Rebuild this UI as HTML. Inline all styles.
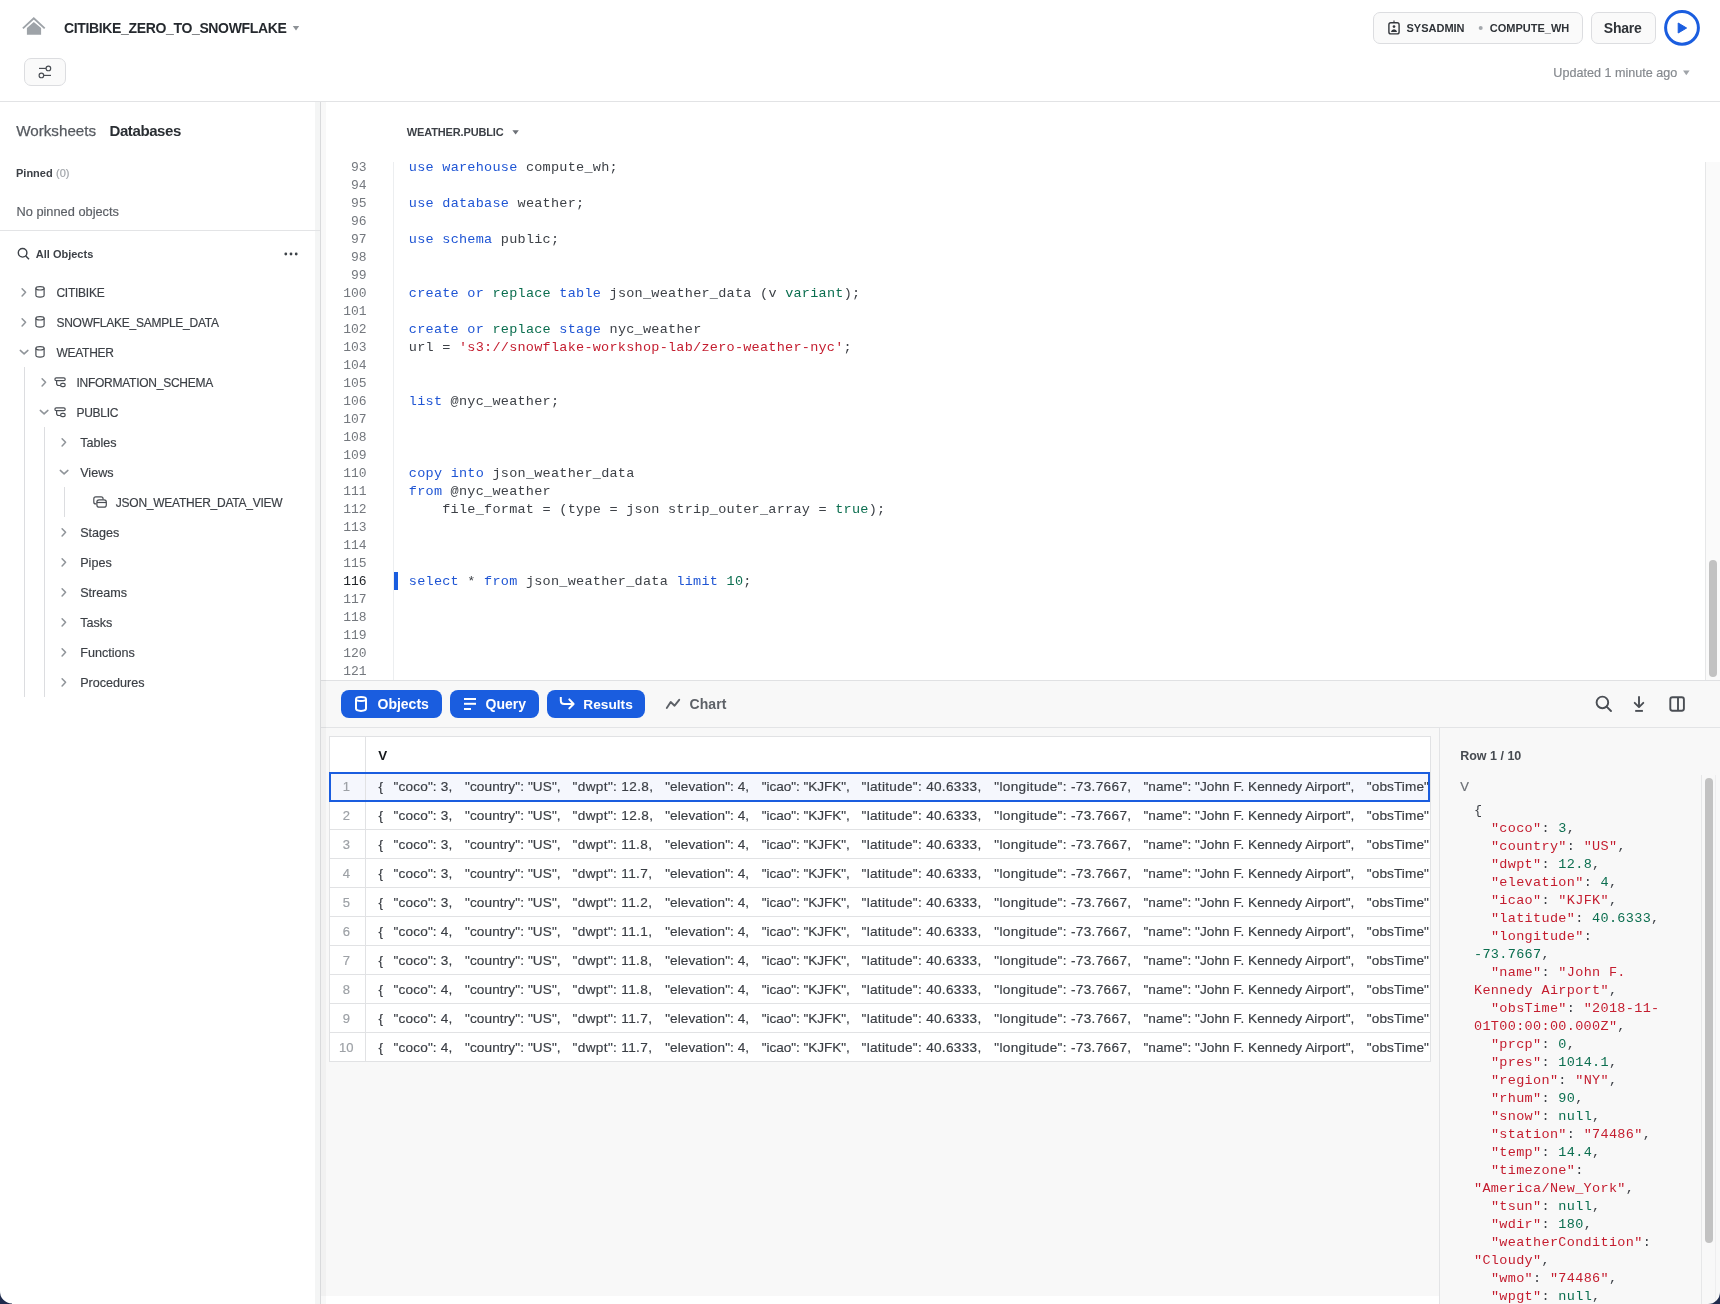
<!DOCTYPE html><html><head><meta charset="utf-8"><style>
*{box-sizing:border-box;margin:0;padding:0}
html,body{width:1720px;height:1304px;overflow:hidden;background:#fff}
body{position:relative;font-family:'Liberation Sans',sans-serif}
#w{position:absolute;left:0;top:0;width:1720px;height:1304px;will-change:transform}
.t{position:absolute;white-space:pre}
.r{-webkit-text-stroke:0.18px currentColor}
.a{position:absolute}
svg{position:absolute;overflow:visible}
</style></head><body><div id="w">
<div class="a" style="left:0;top:101px;width:1720px;height:1px;background:#e2e3e5"></div>
<svg style="left:0;top:0" width="60" height="40"><polyline points="22.9,28.4 33.8,18.3 44.7,28.4" fill="none" stroke="#9ea3a8" stroke-width="1.9"/><polygon points="26.9,28 33.8,21.9 41.1,28 41.1,34.8 26.9,34.8" fill="#9ea3a8"/></svg>
<div class="t" style="left:64.00px;top:21px;font-size:14px;line-height:14px;font-weight:700;color:#25292e;font-family:'Liberation Sans', sans-serif;letter-spacing:-0.35px;">CITIBIKE_ZERO_TO_SNOWFLAKE</div>
<svg style="left:0;top:0" width="320" height="40"><polygon points="292.8,26 299.2,26 296,30.4" fill="#8d9196"/></svg>
<div class="a" style="left:24px;top:58px;width:42px;height:28px;border:1px solid #dcdde0;border-radius:7px;background:#fafafa"></div>
<svg style="left:0;top:0" width="80" height="100"><g fill="none" stroke="#4a4e54" stroke-width="1.15"><line x1="39" y1="68.4" x2="46.1" y2="68.4"/><circle cx="48.4" cy="68.4" r="2.3"/><line x1="43.7" y1="75.4" x2="51" y2="75.4"/><circle cx="41.4" cy="75.4" r="2.3"/></g></svg>
<div class="a" style="left:1373px;top:12px;width:210px;height:32px;border:1px solid #dcdde0;border-radius:7px;background:#fafafa"></div>
<svg style="left:0;top:0" width="1720" height="50"><g fill="none" stroke="#33373c" stroke-width="1.4"><rect x="1388.9" y="22.8" width="10.2" height="11.1" rx="2"/><line x1="1394" y1="20.4" x2="1394" y2="22.8" stroke-width="1.1"/></g><circle cx="1394" cy="26.6" r="1.35" fill="#33373c"/><path d="M1390.9 31.9 Q1391.5 29.2 1394 29.2 Q1396.5 29.2 1397.1 31.9 Z" fill="#33373c"/><circle cx="1480.7" cy="28" r="2" fill="#a4a8ad"/></svg>
<div class="t" style="left:1406.50px;top:23px;font-size:11px;line-height:11px;font-weight:700;color:#2f3338;font-family:'Liberation Sans', sans-serif;letter-spacing:0px;">SYSADMIN</div>
<div class="t" style="left:1489.80px;top:23px;font-size:11px;line-height:11px;font-weight:700;color:#2f3338;font-family:'Liberation Sans', sans-serif;letter-spacing:0px;">COMPUTE_WH</div>
<div class="a" style="left:1591px;top:12px;width:65px;height:32px;border:1px solid #dcdde0;border-radius:7px;background:#fafafa"></div>
<div class="t" style="left:1603.80px;top:21px;font-size:14px;line-height:14px;font-weight:700;color:#2f3338;font-family:'Liberation Sans', sans-serif;letter-spacing:-0.2px;">Share</div>
<svg style="left:0;top:0" width="1720" height="60"><circle cx="1682" cy="27.8" r="16.4" fill="#fff" stroke="#1a5ddf" stroke-width="3"/><polygon points="1678.2,23 1686.6,28 1678.2,33" fill="#1a5ddf" stroke="#1a5ddf" stroke-width="1" stroke-linejoin="round"/></svg>
<div class="t r" style="left:1553.30px;top:67px;font-size:12.6px;line-height:12.6px;font-weight:400;color:#85898e;font-family:'Liberation Sans', sans-serif;letter-spacing:0px;">Updated 1 minute ago</div>
<svg style="left:0;top:0" width="1720" height="100"><polygon points="1683,70.5 1689.6,70.5 1686.3,75.2" fill="#a0a4a9"/></svg>
<div class="a" style="left:315px;top:102px;width:5px;height:1202px;background:#f4f5f5"></div>
<div class="a" style="left:320px;top:102px;width:1px;height:1202px;background:#d9dadc"></div>
<div class="t" style="left:16.20px;top:123px;font-size:15.2px;line-height:15.2px;font-weight:400;color:#565a60;font-family:'Liberation Sans', sans-serif;letter-spacing:0px;-webkit-text-stroke:0.25px #565a60">Worksheets</div>
<div class="t" style="left:109.50px;top:123px;font-size:15px;line-height:15px;font-weight:700;color:#2a2e33;font-family:'Liberation Sans', sans-serif;letter-spacing:-0.4px;">Databases</div>
<div class="t" style="left:16.00px;top:168px;font-size:11px;line-height:11px;font-weight:700;color:#3d4147;font-family:'Liberation Sans', sans-serif;letter-spacing:0px;">Pinned</div>
<div class="t r" style="left:56.00px;top:168px;font-size:11px;line-height:11px;font-weight:400;color:#a0a4a9;font-family:'Liberation Sans', sans-serif;letter-spacing:0px;">(0)</div>
<div class="t r" style="left:16.50px;top:206px;font-size:12.8px;line-height:12.8px;font-weight:400;color:#5b5f65;font-family:'Liberation Sans', sans-serif;letter-spacing:0px;">No pinned objects</div>
<div class="a" style="left:0;top:230px;width:320px;height:1px;background:#e3e4e6"></div>
<svg style="left:0;top:0" width="320" height="300"><circle cx="22.6" cy="252.8" r="4.3" fill="none" stroke="#3d4248" stroke-width="1.4"/><line x1="25.8" y1="256" x2="29" y2="259.2" stroke="#3d4248" stroke-width="1.5"/><circle cx="285.8" cy="254" r="1.4" fill="#3d4248"/><circle cx="291" cy="254" r="1.4" fill="#3d4248"/><circle cx="296.2" cy="254" r="1.4" fill="#3d4248"/></svg>
<div class="t" style="left:35.80px;top:249px;font-size:11px;line-height:11px;font-weight:700;color:#3d4147;font-family:'Liberation Sans', sans-serif;letter-spacing:0px;">All Objects</div>
<div class="t r" style="left:56.40px;top:287px;font-size:12px;line-height:12px;font-weight:400;color:#3b3f45;font-family:'Liberation Sans', sans-serif;letter-spacing:-0.25px;">CITIBIKE</div>
<div class="t r" style="left:56.40px;top:317px;font-size:12px;line-height:12px;font-weight:400;color:#3b3f45;font-family:'Liberation Sans', sans-serif;letter-spacing:-0.25px;">SNOWFLAKE_SAMPLE_DATA</div>
<div class="t r" style="left:56.40px;top:347px;font-size:12px;line-height:12px;font-weight:400;color:#3b3f45;font-family:'Liberation Sans', sans-serif;letter-spacing:-0.25px;">WEATHER</div>
<div class="t r" style="left:76.40px;top:377px;font-size:12px;line-height:12px;font-weight:400;color:#3b3f45;font-family:'Liberation Sans', sans-serif;letter-spacing:-0.25px;">INFORMATION_SCHEMA</div>
<div class="t r" style="left:76.40px;top:407px;font-size:12px;line-height:12px;font-weight:400;color:#3b3f45;font-family:'Liberation Sans', sans-serif;letter-spacing:-0.25px;">PUBLIC</div>
<div class="t r" style="left:80.20px;top:437px;font-size:12.6px;line-height:12.6px;font-weight:400;color:#3b3f45;font-family:'Liberation Sans', sans-serif;letter-spacing:0px;">Tables</div>
<div class="t r" style="left:80.20px;top:467px;font-size:12.6px;line-height:12.6px;font-weight:400;color:#3b3f45;font-family:'Liberation Sans', sans-serif;letter-spacing:0px;">Views</div>
<div class="t r" style="left:115.80px;top:497px;font-size:12px;line-height:12px;font-weight:400;color:#3b3f45;font-family:'Liberation Sans', sans-serif;letter-spacing:-0.25px;">JSON_WEATHER_DATA_VIEW</div>
<div class="t r" style="left:80.20px;top:527px;font-size:12.6px;line-height:12.6px;font-weight:400;color:#3b3f45;font-family:'Liberation Sans', sans-serif;letter-spacing:0px;">Stages</div>
<div class="t r" style="left:80.20px;top:557px;font-size:12.6px;line-height:12.6px;font-weight:400;color:#3b3f45;font-family:'Liberation Sans', sans-serif;letter-spacing:0px;">Pipes</div>
<div class="t r" style="left:80.20px;top:587px;font-size:12.6px;line-height:12.6px;font-weight:400;color:#3b3f45;font-family:'Liberation Sans', sans-serif;letter-spacing:0px;">Streams</div>
<div class="t r" style="left:80.20px;top:617px;font-size:12.6px;line-height:12.6px;font-weight:400;color:#3b3f45;font-family:'Liberation Sans', sans-serif;letter-spacing:0px;">Tasks</div>
<div class="t r" style="left:80.20px;top:647px;font-size:12.6px;line-height:12.6px;font-weight:400;color:#3b3f45;font-family:'Liberation Sans', sans-serif;letter-spacing:0px;">Functions</div>
<div class="t r" style="left:80.20px;top:677px;font-size:12.6px;line-height:12.6px;font-weight:400;color:#3b3f45;font-family:'Liberation Sans', sans-serif;letter-spacing:0px;">Procedures</div>
<svg style="left:0;top:0" width="320" height="720"><g fill="none" stroke="#8f9499" stroke-width="1.5" stroke-linecap="round" stroke-linejoin="round"><polyline points="22.1,288.7 25.6,292.3 22.1,295.90000000000003"/><polyline points="22.1,318.7 25.6,322.3 22.1,325.90000000000003"/><polyline points="20.3,350.40000000000003 24.1,353.90000000000003 27.9,350.40000000000003"/><polyline points="42.099999999999994,378.7 45.599999999999994,382.3 42.099999999999994,385.90000000000003"/><polyline points="40.3,410.40000000000003 44.099999999999994,413.90000000000003 47.9,410.40000000000003"/><polyline points="62.099999999999994,438.7 65.6,442.3 62.099999999999994,445.90000000000003"/><polyline points="60.3,470.40000000000003 64.1,473.90000000000003 67.89999999999999,470.40000000000003"/><polyline points="62.099999999999994,528.6999999999999 65.6,532.3 62.099999999999994,535.9"/><polyline points="62.099999999999994,558.6999999999999 65.6,562.3 62.099999999999994,565.9"/><polyline points="62.099999999999994,588.6999999999999 65.6,592.3 62.099999999999994,595.9"/><polyline points="62.099999999999994,618.6999999999999 65.6,622.3 62.099999999999994,625.9"/><polyline points="62.099999999999994,648.6999999999999 65.6,652.3 62.099999999999994,655.9"/><polyline points="62.099999999999994,678.6999999999999 65.6,682.3 62.099999999999994,685.9"/></g><g fill="none" stroke="#4a4e54" stroke-width="1.2"><path d="M35.900000000000006 288.3 v7 q0 1.8 4.1 1.8 q4.1 0 4.1 -1.8 v-7"/><ellipse cx="40.0" cy="288.3" rx="4.1" ry="1.7"/><path d="M35.900000000000006 318.3 v7 q0 1.8 4.1 1.8 q4.1 0 4.1 -1.8 v-7"/><ellipse cx="40.0" cy="318.3" rx="4.1" ry="1.7"/><path d="M35.900000000000006 348.3 v7 q0 1.8 4.1 1.8 q4.1 0 4.1 -1.8 v-7"/><ellipse cx="40.0" cy="348.3" rx="4.1" ry="1.7"/><rect x="54.9" y="377.8" width="10.3" height="2.9" rx="1.45"/><rect x="60.6" y="383.3" width="4.6" height="3.3" rx="1.65"/><path d="M56.6 380.7 v2.6 q0 2.2 2.2 2.2 h1.8"/><rect x="54.9" y="407.8" width="10.3" height="2.9" rx="1.45"/><rect x="60.6" y="413.3" width="4.6" height="3.3" rx="1.65"/><path d="M56.6 410.7 v2.6 q0 2.2 2.2 2.2 h1.8"/><rect x="96.9" y="499.90000000000003" width="9.4" height="7.2" rx="2.2"/><path d="M96.3 503.90000000000003 h-0.5 a2 2 0 0 1 -2 -2 v-3 a2 2 0 0 1 2 -2 h5.3 a2 2 0 0 1 2 2 v0.6"/><line x1="96.9" y1="502.5" x2="106.3" y2="502.5"/></g></svg>
<div class="a" style="left:24px;top:367px;width:1px;height:330px;background:#dcdde0"></div>
<div class="a" style="left:44px;top:427px;width:1px;height:270px;background:#dcdde0"></div>
<div class="a" style="left:64px;top:487px;width:1px;height:30px;background:#dcdde0"></div>
<div class="t" style="left:406.80px;top:127px;font-size:11px;line-height:11px;font-weight:700;color:#3d4147;font-family:'Liberation Sans', sans-serif;letter-spacing:-0.15px;">WEATHER.PUBLIC</div>
<svg style="left:0;top:0" width="600" height="200"><polygon points="512.4,130.2 518.8,130.2 515.6,134.4" fill="#6d7177"/></svg>
<div class="a" style="left:393px;top:162px;width:1px;height:518px;background:#eceef0"></div>
<div class="t" style="left:326px;width:40.6px;text-align:right;top:161px;font:13px/13px 'Liberation Mono', monospace;letter-spacing:0px;color:#74787e">93</div>
<div class="t" style="left:408.8px;top:161px;font:13.5px/13.5px 'Liberation Mono', monospace;letter-spacing:0.26px;color:#3d4147"><span style="color:#1f55d4">use</span> <span style="color:#1f55d4">warehouse</span> compute_wh;</div>
<div class="t" style="left:326px;width:40.6px;text-align:right;top:179px;font:13px/13px 'Liberation Mono', monospace;letter-spacing:0px;color:#74787e">94</div>
<div class="t" style="left:326px;width:40.6px;text-align:right;top:197px;font:13px/13px 'Liberation Mono', monospace;letter-spacing:0px;color:#74787e">95</div>
<div class="t" style="left:408.8px;top:197px;font:13.5px/13.5px 'Liberation Mono', monospace;letter-spacing:0.26px;color:#3d4147"><span style="color:#1f55d4">use</span> <span style="color:#1f55d4">database</span> weather;</div>
<div class="t" style="left:326px;width:40.6px;text-align:right;top:215px;font:13px/13px 'Liberation Mono', monospace;letter-spacing:0px;color:#74787e">96</div>
<div class="t" style="left:326px;width:40.6px;text-align:right;top:233px;font:13px/13px 'Liberation Mono', monospace;letter-spacing:0px;color:#74787e">97</div>
<div class="t" style="left:408.8px;top:233px;font:13.5px/13.5px 'Liberation Mono', monospace;letter-spacing:0.26px;color:#3d4147"><span style="color:#1f55d4">use</span> <span style="color:#1f55d4">schema</span> public;</div>
<div class="t" style="left:326px;width:40.6px;text-align:right;top:251px;font:13px/13px 'Liberation Mono', monospace;letter-spacing:0px;color:#74787e">98</div>
<div class="t" style="left:326px;width:40.6px;text-align:right;top:269px;font:13px/13px 'Liberation Mono', monospace;letter-spacing:0px;color:#74787e">99</div>
<div class="t" style="left:326px;width:40.6px;text-align:right;top:287px;font:13px/13px 'Liberation Mono', monospace;letter-spacing:0px;color:#74787e">100</div>
<div class="t" style="left:408.8px;top:287px;font:13.5px/13.5px 'Liberation Mono', monospace;letter-spacing:0.26px;color:#3d4147"><span style="color:#1f55d4">create</span> <span style="color:#1f55d4">or</span> <span style="color:#0b6e4f">replace</span> <span style="color:#1f55d4">table</span> json_weather_data (v <span style="color:#0b6e4f">variant</span>);</div>
<div class="t" style="left:326px;width:40.6px;text-align:right;top:305px;font:13px/13px 'Liberation Mono', monospace;letter-spacing:0px;color:#74787e">101</div>
<div class="t" style="left:326px;width:40.6px;text-align:right;top:323px;font:13px/13px 'Liberation Mono', monospace;letter-spacing:0px;color:#74787e">102</div>
<div class="t" style="left:408.8px;top:323px;font:13.5px/13.5px 'Liberation Mono', monospace;letter-spacing:0.26px;color:#3d4147"><span style="color:#1f55d4">create</span> <span style="color:#1f55d4">or</span> <span style="color:#0b6e4f">replace</span> <span style="color:#1f55d4">stage</span> nyc_weather</div>
<div class="t" style="left:326px;width:40.6px;text-align:right;top:341px;font:13px/13px 'Liberation Mono', monospace;letter-spacing:0px;color:#74787e">103</div>
<div class="t" style="left:408.8px;top:341px;font:13.5px/13.5px 'Liberation Mono', monospace;letter-spacing:0.26px;color:#3d4147">url = <span style="color:#c41d2f">&#x27;s3://snowflake-workshop-lab/zero-weather-nyc&#x27;</span>;</div>
<div class="t" style="left:326px;width:40.6px;text-align:right;top:359px;font:13px/13px 'Liberation Mono', monospace;letter-spacing:0px;color:#74787e">104</div>
<div class="t" style="left:326px;width:40.6px;text-align:right;top:377px;font:13px/13px 'Liberation Mono', monospace;letter-spacing:0px;color:#74787e">105</div>
<div class="t" style="left:326px;width:40.6px;text-align:right;top:395px;font:13px/13px 'Liberation Mono', monospace;letter-spacing:0px;color:#74787e">106</div>
<div class="t" style="left:408.8px;top:395px;font:13.5px/13.5px 'Liberation Mono', monospace;letter-spacing:0.26px;color:#3d4147"><span style="color:#1f55d4">list</span> @nyc_weather;</div>
<div class="t" style="left:326px;width:40.6px;text-align:right;top:413px;font:13px/13px 'Liberation Mono', monospace;letter-spacing:0px;color:#74787e">107</div>
<div class="t" style="left:326px;width:40.6px;text-align:right;top:431px;font:13px/13px 'Liberation Mono', monospace;letter-spacing:0px;color:#74787e">108</div>
<div class="t" style="left:326px;width:40.6px;text-align:right;top:449px;font:13px/13px 'Liberation Mono', monospace;letter-spacing:0px;color:#74787e">109</div>
<div class="t" style="left:326px;width:40.6px;text-align:right;top:467px;font:13px/13px 'Liberation Mono', monospace;letter-spacing:0px;color:#74787e">110</div>
<div class="t" style="left:408.8px;top:467px;font:13.5px/13.5px 'Liberation Mono', monospace;letter-spacing:0.26px;color:#3d4147"><span style="color:#1f55d4">copy</span> <span style="color:#1f55d4">into</span> json_weather_data</div>
<div class="t" style="left:326px;width:40.6px;text-align:right;top:485px;font:13px/13px 'Liberation Mono', monospace;letter-spacing:0px;color:#74787e">111</div>
<div class="t" style="left:408.8px;top:485px;font:13.5px/13.5px 'Liberation Mono', monospace;letter-spacing:0.26px;color:#3d4147"><span style="color:#1f55d4">from</span> @nyc_weather</div>
<div class="t" style="left:326px;width:40.6px;text-align:right;top:503px;font:13px/13px 'Liberation Mono', monospace;letter-spacing:0px;color:#74787e">112</div>
<div class="t" style="left:408.8px;top:503px;font:13.5px/13.5px 'Liberation Mono', monospace;letter-spacing:0.26px;color:#3d4147">    file_format = (type = json strip_outer_array = <span style="color:#0b6e4f">true</span>);</div>
<div class="t" style="left:326px;width:40.6px;text-align:right;top:521px;font:13px/13px 'Liberation Mono', monospace;letter-spacing:0px;color:#74787e">113</div>
<div class="t" style="left:326px;width:40.6px;text-align:right;top:539px;font:13px/13px 'Liberation Mono', monospace;letter-spacing:0px;color:#74787e">114</div>
<div class="t" style="left:326px;width:40.6px;text-align:right;top:557px;font:13px/13px 'Liberation Mono', monospace;letter-spacing:0px;color:#74787e">115</div>
<div class="t" style="left:326px;width:40.6px;text-align:right;top:575px;font:13px/13px 'Liberation Mono', monospace;letter-spacing:0px;color:#1e2226">116</div>
<div class="t" style="left:408.8px;top:575px;font:13.5px/13.5px 'Liberation Mono', monospace;letter-spacing:0.26px;color:#3d4147"><span style="color:#1f55d4">select</span> * <span style="color:#1f55d4">from</span> json_weather_data <span style="color:#1f55d4">limit</span> <span style="color:#0b6e4f">10</span>;</div>
<div class="t" style="left:326px;width:40.6px;text-align:right;top:593px;font:13px/13px 'Liberation Mono', monospace;letter-spacing:0px;color:#74787e">117</div>
<div class="t" style="left:326px;width:40.6px;text-align:right;top:611px;font:13px/13px 'Liberation Mono', monospace;letter-spacing:0px;color:#74787e">118</div>
<div class="t" style="left:326px;width:40.6px;text-align:right;top:629px;font:13px/13px 'Liberation Mono', monospace;letter-spacing:0px;color:#74787e">119</div>
<div class="t" style="left:326px;width:40.6px;text-align:right;top:647px;font:13px/13px 'Liberation Mono', monospace;letter-spacing:0px;color:#74787e">120</div>
<div class="t" style="left:326px;width:40.6px;text-align:right;top:665px;font:13px/13px 'Liberation Mono', monospace;letter-spacing:0px;color:#74787e">121</div>
<div class="a" style="left:394px;top:572px;width:4px;height:18px;background:#1a5ddf"></div>
<div class="a" style="left:1705px;top:162px;width:15px;height:518px;background:#fafafa;border-left:1px solid #e6e7e8"></div>
<div class="a" style="left:1709px;top:560px;width:8px;height:117px;border-radius:4px;background:#c2c2c2"></div>
<div class="a" style="left:321px;top:680px;width:1399px;height:1px;background:#e0e1e3"></div>
<div class="a" style="left:321px;top:681px;width:1399px;height:46px;background:#f8f8f8"></div>
<div class="a" style="left:321px;top:727px;width:1399px;height:1px;background:#e3e4e6"></div>
<div class="a" style="left:341px;top:690px;width:101px;height:28px;border-radius:8px;background:#1a5ddf"></div>
<div class="t" style="left:377.50px;top:697px;font-size:14px;line-height:14px;font-weight:700;color:#ffffff;font-family:'Liberation Sans', sans-serif;letter-spacing:0px;">Objects</div>
<div class="a" style="left:450px;top:690px;width:89px;height:28px;border-radius:8px;background:#1a5ddf"></div>
<div class="t" style="left:485.50px;top:697px;font-size:14px;line-height:14px;font-weight:700;color:#ffffff;font-family:'Liberation Sans', sans-serif;letter-spacing:0px;">Query</div>
<div class="a" style="left:547px;top:690px;width:98px;height:28px;border-radius:8px;background:#1a5ddf"></div>
<div class="t" style="left:583.30px;top:698px;font-size:13.7px;line-height:13.7px;font-weight:700;color:#ffffff;font-family:'Liberation Sans', sans-serif;letter-spacing:0px;">Results</div>
<svg style="left:0;top:0" width="1720" height="760"><g fill="none" stroke="#fff" stroke-width="2"><path d="M356 699 v9.6 q0 2.3 5 2.3 q5 0 5 -2.3 v-9.6"/><ellipse cx="361" cy="699" rx="5" ry="2"/><line x1="464" y1="699" x2="476" y2="699"/><line x1="464" y1="703.8" x2="476" y2="703.8"/><line x1="464" y1="709" x2="471" y2="709"/><path d="M560.8 696.9 v3.6 q0 3.5 3.5 3.5 h9.2" stroke-linejoin="round"/><polyline points="569.3,699.4 573.6,704 569.3,708.4" stroke-linecap="round" stroke-linejoin="round"/></g><polyline points="666.8,708 670.7,702 674.6,705.7 679.2,699.8" fill="none" stroke="#5d6167" stroke-width="1.9" stroke-linecap="round" stroke-linejoin="round"/><g fill="none" stroke="#4a4e54" stroke-width="1.9"><circle cx="1602.4" cy="702.4" r="5.8"/><line x1="1606.6" y1="706.6" x2="1611" y2="711" stroke-linecap="round"/><line x1="1639" y1="696.3" x2="1639" y2="707"/><polyline points="1634.7,702.8 1639,707.1 1643.3,702.8" stroke-linejoin="round" stroke-linecap="round"/><line x1="1635.2" y1="710.9" x2="1642.9" y2="710.9"/><rect x="1670.3" y="697.2" width="13.6" height="13.6" rx="2.2"/><line x1="1678" y1="697.2" x2="1678" y2="710.8"/></g></svg>
<div class="t" style="left:689.60px;top:697px;font-size:14px;line-height:14px;font-weight:700;color:#5d6167;font-family:'Liberation Sans', sans-serif;letter-spacing:0.05px;">Chart</div>
<div class="a" style="left:321px;top:728px;width:1118px;height:568px;background:#f8f8f8"></div>
<div class="a" style="left:1439px;top:728px;width:1px;height:576px;background:#e3e4e6"></div>
<div class="a" style="left:1440px;top:728px;width:280px;height:576px;background:#f8f8f8"></div>
<div class="a" style="left:329px;top:736px;width:1102px;height:326px;background:#fff;border:1px solid #e1e2e4"></div>
<div class="a" style="left:365px;top:736px;width:1px;height:326px;background:#e1e2e4"></div>
<div class="t" style="left:378.30px;top:749px;font-size:13.4px;line-height:13.4px;font-weight:700;color:#15181c;font-family:'Liberation Sans', sans-serif;letter-spacing:0px;">V</div>
<div class="a" style="left:329px;top:772px;width:1102px;height:30px;background:#f5f7fd"></div>
<div class="t r" style="left:328.80px;top:780px;font-size:13px;line-height:13px;font-weight:400;color:#9da1a6;font-family:'Liberation Sans', sans-serif;letter-spacing:0px;width:35px;text-align:center">1</div>
<div class="t r" style="left:378.40px;top:780px;font-size:13.6px;line-height:13.6px;font-weight:400;color:#3a3e44;font-family:'Liberation Sans', sans-serif;letter-spacing:0px;">{</div>
<div class="t r" style="left:393.60px;top:780px;font-size:13.6px;line-height:13.6px;font-weight:400;color:#3a3e44;font-family:'Liberation Sans', sans-serif;letter-spacing:0.15px;">&quot;coco&quot;: 3,</div>
<div class="t r" style="left:465.00px;top:780px;font-size:13.6px;line-height:13.6px;font-weight:400;color:#3a3e44;font-family:'Liberation Sans', sans-serif;letter-spacing:0.1px;">&quot;country&quot;: &quot;US&quot;,</div>
<div class="t r" style="left:572.60px;top:780px;font-size:13.6px;line-height:13.6px;font-weight:400;color:#3a3e44;font-family:'Liberation Sans', sans-serif;letter-spacing:0.35px;">&quot;dwpt&quot;: 12.8,</div>
<div class="t r" style="left:665.20px;top:780px;font-size:13.6px;line-height:13.6px;font-weight:400;color:#3a3e44;font-family:'Liberation Sans', sans-serif;letter-spacing:0.07px;">&quot;elevation&quot;: 4,</div>
<div class="t r" style="left:761.80px;top:780px;font-size:13.6px;line-height:13.6px;font-weight:400;color:#3a3e44;font-family:'Liberation Sans', sans-serif;letter-spacing:-0.05px;">&quot;icao&quot;: &quot;KJFK&quot;,</div>
<div class="t r" style="left:861.50px;top:780px;font-size:13.6px;line-height:13.6px;font-weight:400;color:#3a3e44;font-family:'Liberation Sans', sans-serif;letter-spacing:0.3px;">&quot;latitude&quot;: 40.6333,</div>
<div class="t r" style="left:994.30px;top:780px;font-size:13.6px;line-height:13.6px;font-weight:400;color:#3a3e44;font-family:'Liberation Sans', sans-serif;letter-spacing:0.33px;">&quot;longitude&quot;: -73.7667,</div>
<div class="t r" style="left:1143.40px;top:780px;font-size:13.6px;line-height:13.6px;font-weight:400;color:#3a3e44;font-family:'Liberation Sans', sans-serif;letter-spacing:0.06px;">&quot;name&quot;: &quot;John F. Kennedy Airport&quot;,</div>
<div class="t r" style="left:1366.80px;top:780px;font-size:13.6px;line-height:13.6px;font-weight:400;color:#3a3e44;font-family:'Liberation Sans', sans-serif;letter-spacing:0.1px;">&quot;obsTime&quot;</div>
<div class="a" style="left:330px;top:800px;width:1100px;height:1px;background:#e1e2e4"></div>
<div class="t r" style="left:328.80px;top:809px;font-size:13px;line-height:13px;font-weight:400;color:#9da1a6;font-family:'Liberation Sans', sans-serif;letter-spacing:0px;width:35px;text-align:center">2</div>
<div class="t r" style="left:378.40px;top:809px;font-size:13.6px;line-height:13.6px;font-weight:400;color:#3a3e44;font-family:'Liberation Sans', sans-serif;letter-spacing:0px;">{</div>
<div class="t r" style="left:393.60px;top:809px;font-size:13.6px;line-height:13.6px;font-weight:400;color:#3a3e44;font-family:'Liberation Sans', sans-serif;letter-spacing:0.15px;">&quot;coco&quot;: 3,</div>
<div class="t r" style="left:465.00px;top:809px;font-size:13.6px;line-height:13.6px;font-weight:400;color:#3a3e44;font-family:'Liberation Sans', sans-serif;letter-spacing:0.1px;">&quot;country&quot;: &quot;US&quot;,</div>
<div class="t r" style="left:572.60px;top:809px;font-size:13.6px;line-height:13.6px;font-weight:400;color:#3a3e44;font-family:'Liberation Sans', sans-serif;letter-spacing:0.35px;">&quot;dwpt&quot;: 12.8,</div>
<div class="t r" style="left:665.20px;top:809px;font-size:13.6px;line-height:13.6px;font-weight:400;color:#3a3e44;font-family:'Liberation Sans', sans-serif;letter-spacing:0.07px;">&quot;elevation&quot;: 4,</div>
<div class="t r" style="left:761.80px;top:809px;font-size:13.6px;line-height:13.6px;font-weight:400;color:#3a3e44;font-family:'Liberation Sans', sans-serif;letter-spacing:-0.05px;">&quot;icao&quot;: &quot;KJFK&quot;,</div>
<div class="t r" style="left:861.50px;top:809px;font-size:13.6px;line-height:13.6px;font-weight:400;color:#3a3e44;font-family:'Liberation Sans', sans-serif;letter-spacing:0.3px;">&quot;latitude&quot;: 40.6333,</div>
<div class="t r" style="left:994.30px;top:809px;font-size:13.6px;line-height:13.6px;font-weight:400;color:#3a3e44;font-family:'Liberation Sans', sans-serif;letter-spacing:0.33px;">&quot;longitude&quot;: -73.7667,</div>
<div class="t r" style="left:1143.40px;top:809px;font-size:13.6px;line-height:13.6px;font-weight:400;color:#3a3e44;font-family:'Liberation Sans', sans-serif;letter-spacing:0.06px;">&quot;name&quot;: &quot;John F. Kennedy Airport&quot;,</div>
<div class="t r" style="left:1366.80px;top:809px;font-size:13.6px;line-height:13.6px;font-weight:400;color:#3a3e44;font-family:'Liberation Sans', sans-serif;letter-spacing:0.1px;">&quot;obsTime&quot;</div>
<div class="a" style="left:330px;top:829px;width:1100px;height:1px;background:#e1e2e4"></div>
<div class="t r" style="left:328.80px;top:838px;font-size:13px;line-height:13px;font-weight:400;color:#9da1a6;font-family:'Liberation Sans', sans-serif;letter-spacing:0px;width:35px;text-align:center">3</div>
<div class="t r" style="left:378.40px;top:838px;font-size:13.6px;line-height:13.6px;font-weight:400;color:#3a3e44;font-family:'Liberation Sans', sans-serif;letter-spacing:0px;">{</div>
<div class="t r" style="left:393.60px;top:838px;font-size:13.6px;line-height:13.6px;font-weight:400;color:#3a3e44;font-family:'Liberation Sans', sans-serif;letter-spacing:0.15px;">&quot;coco&quot;: 3,</div>
<div class="t r" style="left:465.00px;top:838px;font-size:13.6px;line-height:13.6px;font-weight:400;color:#3a3e44;font-family:'Liberation Sans', sans-serif;letter-spacing:0.1px;">&quot;country&quot;: &quot;US&quot;,</div>
<div class="t r" style="left:572.60px;top:838px;font-size:13.6px;line-height:13.6px;font-weight:400;color:#3a3e44;font-family:'Liberation Sans', sans-serif;letter-spacing:0.35px;">&quot;dwpt&quot;: 11.8,</div>
<div class="t r" style="left:665.20px;top:838px;font-size:13.6px;line-height:13.6px;font-weight:400;color:#3a3e44;font-family:'Liberation Sans', sans-serif;letter-spacing:0.07px;">&quot;elevation&quot;: 4,</div>
<div class="t r" style="left:761.80px;top:838px;font-size:13.6px;line-height:13.6px;font-weight:400;color:#3a3e44;font-family:'Liberation Sans', sans-serif;letter-spacing:-0.05px;">&quot;icao&quot;: &quot;KJFK&quot;,</div>
<div class="t r" style="left:861.50px;top:838px;font-size:13.6px;line-height:13.6px;font-weight:400;color:#3a3e44;font-family:'Liberation Sans', sans-serif;letter-spacing:0.3px;">&quot;latitude&quot;: 40.6333,</div>
<div class="t r" style="left:994.30px;top:838px;font-size:13.6px;line-height:13.6px;font-weight:400;color:#3a3e44;font-family:'Liberation Sans', sans-serif;letter-spacing:0.33px;">&quot;longitude&quot;: -73.7667,</div>
<div class="t r" style="left:1143.40px;top:838px;font-size:13.6px;line-height:13.6px;font-weight:400;color:#3a3e44;font-family:'Liberation Sans', sans-serif;letter-spacing:0.06px;">&quot;name&quot;: &quot;John F. Kennedy Airport&quot;,</div>
<div class="t r" style="left:1366.80px;top:838px;font-size:13.6px;line-height:13.6px;font-weight:400;color:#3a3e44;font-family:'Liberation Sans', sans-serif;letter-spacing:0.1px;">&quot;obsTime&quot;</div>
<div class="a" style="left:330px;top:858px;width:1100px;height:1px;background:#e1e2e4"></div>
<div class="t r" style="left:328.80px;top:867px;font-size:13px;line-height:13px;font-weight:400;color:#9da1a6;font-family:'Liberation Sans', sans-serif;letter-spacing:0px;width:35px;text-align:center">4</div>
<div class="t r" style="left:378.40px;top:867px;font-size:13.6px;line-height:13.6px;font-weight:400;color:#3a3e44;font-family:'Liberation Sans', sans-serif;letter-spacing:0px;">{</div>
<div class="t r" style="left:393.60px;top:867px;font-size:13.6px;line-height:13.6px;font-weight:400;color:#3a3e44;font-family:'Liberation Sans', sans-serif;letter-spacing:0.15px;">&quot;coco&quot;: 3,</div>
<div class="t r" style="left:465.00px;top:867px;font-size:13.6px;line-height:13.6px;font-weight:400;color:#3a3e44;font-family:'Liberation Sans', sans-serif;letter-spacing:0.1px;">&quot;country&quot;: &quot;US&quot;,</div>
<div class="t r" style="left:572.60px;top:867px;font-size:13.6px;line-height:13.6px;font-weight:400;color:#3a3e44;font-family:'Liberation Sans', sans-serif;letter-spacing:0.35px;">&quot;dwpt&quot;: 11.7,</div>
<div class="t r" style="left:665.20px;top:867px;font-size:13.6px;line-height:13.6px;font-weight:400;color:#3a3e44;font-family:'Liberation Sans', sans-serif;letter-spacing:0.07px;">&quot;elevation&quot;: 4,</div>
<div class="t r" style="left:761.80px;top:867px;font-size:13.6px;line-height:13.6px;font-weight:400;color:#3a3e44;font-family:'Liberation Sans', sans-serif;letter-spacing:-0.05px;">&quot;icao&quot;: &quot;KJFK&quot;,</div>
<div class="t r" style="left:861.50px;top:867px;font-size:13.6px;line-height:13.6px;font-weight:400;color:#3a3e44;font-family:'Liberation Sans', sans-serif;letter-spacing:0.3px;">&quot;latitude&quot;: 40.6333,</div>
<div class="t r" style="left:994.30px;top:867px;font-size:13.6px;line-height:13.6px;font-weight:400;color:#3a3e44;font-family:'Liberation Sans', sans-serif;letter-spacing:0.33px;">&quot;longitude&quot;: -73.7667,</div>
<div class="t r" style="left:1143.40px;top:867px;font-size:13.6px;line-height:13.6px;font-weight:400;color:#3a3e44;font-family:'Liberation Sans', sans-serif;letter-spacing:0.06px;">&quot;name&quot;: &quot;John F. Kennedy Airport&quot;,</div>
<div class="t r" style="left:1366.80px;top:867px;font-size:13.6px;line-height:13.6px;font-weight:400;color:#3a3e44;font-family:'Liberation Sans', sans-serif;letter-spacing:0.1px;">&quot;obsTime&quot;</div>
<div class="a" style="left:330px;top:887px;width:1100px;height:1px;background:#e1e2e4"></div>
<div class="t r" style="left:328.80px;top:896px;font-size:13px;line-height:13px;font-weight:400;color:#9da1a6;font-family:'Liberation Sans', sans-serif;letter-spacing:0px;width:35px;text-align:center">5</div>
<div class="t r" style="left:378.40px;top:896px;font-size:13.6px;line-height:13.6px;font-weight:400;color:#3a3e44;font-family:'Liberation Sans', sans-serif;letter-spacing:0px;">{</div>
<div class="t r" style="left:393.60px;top:896px;font-size:13.6px;line-height:13.6px;font-weight:400;color:#3a3e44;font-family:'Liberation Sans', sans-serif;letter-spacing:0.15px;">&quot;coco&quot;: 3,</div>
<div class="t r" style="left:465.00px;top:896px;font-size:13.6px;line-height:13.6px;font-weight:400;color:#3a3e44;font-family:'Liberation Sans', sans-serif;letter-spacing:0.1px;">&quot;country&quot;: &quot;US&quot;,</div>
<div class="t r" style="left:572.60px;top:896px;font-size:13.6px;line-height:13.6px;font-weight:400;color:#3a3e44;font-family:'Liberation Sans', sans-serif;letter-spacing:0.35px;">&quot;dwpt&quot;: 11.2,</div>
<div class="t r" style="left:665.20px;top:896px;font-size:13.6px;line-height:13.6px;font-weight:400;color:#3a3e44;font-family:'Liberation Sans', sans-serif;letter-spacing:0.07px;">&quot;elevation&quot;: 4,</div>
<div class="t r" style="left:761.80px;top:896px;font-size:13.6px;line-height:13.6px;font-weight:400;color:#3a3e44;font-family:'Liberation Sans', sans-serif;letter-spacing:-0.05px;">&quot;icao&quot;: &quot;KJFK&quot;,</div>
<div class="t r" style="left:861.50px;top:896px;font-size:13.6px;line-height:13.6px;font-weight:400;color:#3a3e44;font-family:'Liberation Sans', sans-serif;letter-spacing:0.3px;">&quot;latitude&quot;: 40.6333,</div>
<div class="t r" style="left:994.30px;top:896px;font-size:13.6px;line-height:13.6px;font-weight:400;color:#3a3e44;font-family:'Liberation Sans', sans-serif;letter-spacing:0.33px;">&quot;longitude&quot;: -73.7667,</div>
<div class="t r" style="left:1143.40px;top:896px;font-size:13.6px;line-height:13.6px;font-weight:400;color:#3a3e44;font-family:'Liberation Sans', sans-serif;letter-spacing:0.06px;">&quot;name&quot;: &quot;John F. Kennedy Airport&quot;,</div>
<div class="t r" style="left:1366.80px;top:896px;font-size:13.6px;line-height:13.6px;font-weight:400;color:#3a3e44;font-family:'Liberation Sans', sans-serif;letter-spacing:0.1px;">&quot;obsTime&quot;</div>
<div class="a" style="left:330px;top:916px;width:1100px;height:1px;background:#e1e2e4"></div>
<div class="t r" style="left:328.80px;top:925px;font-size:13px;line-height:13px;font-weight:400;color:#9da1a6;font-family:'Liberation Sans', sans-serif;letter-spacing:0px;width:35px;text-align:center">6</div>
<div class="t r" style="left:378.40px;top:925px;font-size:13.6px;line-height:13.6px;font-weight:400;color:#3a3e44;font-family:'Liberation Sans', sans-serif;letter-spacing:0px;">{</div>
<div class="t r" style="left:393.60px;top:925px;font-size:13.6px;line-height:13.6px;font-weight:400;color:#3a3e44;font-family:'Liberation Sans', sans-serif;letter-spacing:0.15px;">&quot;coco&quot;: 4,</div>
<div class="t r" style="left:465.00px;top:925px;font-size:13.6px;line-height:13.6px;font-weight:400;color:#3a3e44;font-family:'Liberation Sans', sans-serif;letter-spacing:0.1px;">&quot;country&quot;: &quot;US&quot;,</div>
<div class="t r" style="left:572.60px;top:925px;font-size:13.6px;line-height:13.6px;font-weight:400;color:#3a3e44;font-family:'Liberation Sans', sans-serif;letter-spacing:0.35px;">&quot;dwpt&quot;: 11.1,</div>
<div class="t r" style="left:665.20px;top:925px;font-size:13.6px;line-height:13.6px;font-weight:400;color:#3a3e44;font-family:'Liberation Sans', sans-serif;letter-spacing:0.07px;">&quot;elevation&quot;: 4,</div>
<div class="t r" style="left:761.80px;top:925px;font-size:13.6px;line-height:13.6px;font-weight:400;color:#3a3e44;font-family:'Liberation Sans', sans-serif;letter-spacing:-0.05px;">&quot;icao&quot;: &quot;KJFK&quot;,</div>
<div class="t r" style="left:861.50px;top:925px;font-size:13.6px;line-height:13.6px;font-weight:400;color:#3a3e44;font-family:'Liberation Sans', sans-serif;letter-spacing:0.3px;">&quot;latitude&quot;: 40.6333,</div>
<div class="t r" style="left:994.30px;top:925px;font-size:13.6px;line-height:13.6px;font-weight:400;color:#3a3e44;font-family:'Liberation Sans', sans-serif;letter-spacing:0.33px;">&quot;longitude&quot;: -73.7667,</div>
<div class="t r" style="left:1143.40px;top:925px;font-size:13.6px;line-height:13.6px;font-weight:400;color:#3a3e44;font-family:'Liberation Sans', sans-serif;letter-spacing:0.06px;">&quot;name&quot;: &quot;John F. Kennedy Airport&quot;,</div>
<div class="t r" style="left:1366.80px;top:925px;font-size:13.6px;line-height:13.6px;font-weight:400;color:#3a3e44;font-family:'Liberation Sans', sans-serif;letter-spacing:0.1px;">&quot;obsTime&quot;</div>
<div class="a" style="left:330px;top:945px;width:1100px;height:1px;background:#e1e2e4"></div>
<div class="t r" style="left:328.80px;top:954px;font-size:13px;line-height:13px;font-weight:400;color:#9da1a6;font-family:'Liberation Sans', sans-serif;letter-spacing:0px;width:35px;text-align:center">7</div>
<div class="t r" style="left:378.40px;top:954px;font-size:13.6px;line-height:13.6px;font-weight:400;color:#3a3e44;font-family:'Liberation Sans', sans-serif;letter-spacing:0px;">{</div>
<div class="t r" style="left:393.60px;top:954px;font-size:13.6px;line-height:13.6px;font-weight:400;color:#3a3e44;font-family:'Liberation Sans', sans-serif;letter-spacing:0.15px;">&quot;coco&quot;: 3,</div>
<div class="t r" style="left:465.00px;top:954px;font-size:13.6px;line-height:13.6px;font-weight:400;color:#3a3e44;font-family:'Liberation Sans', sans-serif;letter-spacing:0.1px;">&quot;country&quot;: &quot;US&quot;,</div>
<div class="t r" style="left:572.60px;top:954px;font-size:13.6px;line-height:13.6px;font-weight:400;color:#3a3e44;font-family:'Liberation Sans', sans-serif;letter-spacing:0.35px;">&quot;dwpt&quot;: 11.8,</div>
<div class="t r" style="left:665.20px;top:954px;font-size:13.6px;line-height:13.6px;font-weight:400;color:#3a3e44;font-family:'Liberation Sans', sans-serif;letter-spacing:0.07px;">&quot;elevation&quot;: 4,</div>
<div class="t r" style="left:761.80px;top:954px;font-size:13.6px;line-height:13.6px;font-weight:400;color:#3a3e44;font-family:'Liberation Sans', sans-serif;letter-spacing:-0.05px;">&quot;icao&quot;: &quot;KJFK&quot;,</div>
<div class="t r" style="left:861.50px;top:954px;font-size:13.6px;line-height:13.6px;font-weight:400;color:#3a3e44;font-family:'Liberation Sans', sans-serif;letter-spacing:0.3px;">&quot;latitude&quot;: 40.6333,</div>
<div class="t r" style="left:994.30px;top:954px;font-size:13.6px;line-height:13.6px;font-weight:400;color:#3a3e44;font-family:'Liberation Sans', sans-serif;letter-spacing:0.33px;">&quot;longitude&quot;: -73.7667,</div>
<div class="t r" style="left:1143.40px;top:954px;font-size:13.6px;line-height:13.6px;font-weight:400;color:#3a3e44;font-family:'Liberation Sans', sans-serif;letter-spacing:0.06px;">&quot;name&quot;: &quot;John F. Kennedy Airport&quot;,</div>
<div class="t r" style="left:1366.80px;top:954px;font-size:13.6px;line-height:13.6px;font-weight:400;color:#3a3e44;font-family:'Liberation Sans', sans-serif;letter-spacing:0.1px;">&quot;obsTime&quot;</div>
<div class="a" style="left:330px;top:974px;width:1100px;height:1px;background:#e1e2e4"></div>
<div class="t r" style="left:328.80px;top:983px;font-size:13px;line-height:13px;font-weight:400;color:#9da1a6;font-family:'Liberation Sans', sans-serif;letter-spacing:0px;width:35px;text-align:center">8</div>
<div class="t r" style="left:378.40px;top:983px;font-size:13.6px;line-height:13.6px;font-weight:400;color:#3a3e44;font-family:'Liberation Sans', sans-serif;letter-spacing:0px;">{</div>
<div class="t r" style="left:393.60px;top:983px;font-size:13.6px;line-height:13.6px;font-weight:400;color:#3a3e44;font-family:'Liberation Sans', sans-serif;letter-spacing:0.15px;">&quot;coco&quot;: 4,</div>
<div class="t r" style="left:465.00px;top:983px;font-size:13.6px;line-height:13.6px;font-weight:400;color:#3a3e44;font-family:'Liberation Sans', sans-serif;letter-spacing:0.1px;">&quot;country&quot;: &quot;US&quot;,</div>
<div class="t r" style="left:572.60px;top:983px;font-size:13.6px;line-height:13.6px;font-weight:400;color:#3a3e44;font-family:'Liberation Sans', sans-serif;letter-spacing:0.35px;">&quot;dwpt&quot;: 11.8,</div>
<div class="t r" style="left:665.20px;top:983px;font-size:13.6px;line-height:13.6px;font-weight:400;color:#3a3e44;font-family:'Liberation Sans', sans-serif;letter-spacing:0.07px;">&quot;elevation&quot;: 4,</div>
<div class="t r" style="left:761.80px;top:983px;font-size:13.6px;line-height:13.6px;font-weight:400;color:#3a3e44;font-family:'Liberation Sans', sans-serif;letter-spacing:-0.05px;">&quot;icao&quot;: &quot;KJFK&quot;,</div>
<div class="t r" style="left:861.50px;top:983px;font-size:13.6px;line-height:13.6px;font-weight:400;color:#3a3e44;font-family:'Liberation Sans', sans-serif;letter-spacing:0.3px;">&quot;latitude&quot;: 40.6333,</div>
<div class="t r" style="left:994.30px;top:983px;font-size:13.6px;line-height:13.6px;font-weight:400;color:#3a3e44;font-family:'Liberation Sans', sans-serif;letter-spacing:0.33px;">&quot;longitude&quot;: -73.7667,</div>
<div class="t r" style="left:1143.40px;top:983px;font-size:13.6px;line-height:13.6px;font-weight:400;color:#3a3e44;font-family:'Liberation Sans', sans-serif;letter-spacing:0.06px;">&quot;name&quot;: &quot;John F. Kennedy Airport&quot;,</div>
<div class="t r" style="left:1366.80px;top:983px;font-size:13.6px;line-height:13.6px;font-weight:400;color:#3a3e44;font-family:'Liberation Sans', sans-serif;letter-spacing:0.1px;">&quot;obsTime&quot;</div>
<div class="a" style="left:330px;top:1003px;width:1100px;height:1px;background:#e1e2e4"></div>
<div class="t r" style="left:328.80px;top:1012px;font-size:13px;line-height:13px;font-weight:400;color:#9da1a6;font-family:'Liberation Sans', sans-serif;letter-spacing:0px;width:35px;text-align:center">9</div>
<div class="t r" style="left:378.40px;top:1012px;font-size:13.6px;line-height:13.6px;font-weight:400;color:#3a3e44;font-family:'Liberation Sans', sans-serif;letter-spacing:0px;">{</div>
<div class="t r" style="left:393.60px;top:1012px;font-size:13.6px;line-height:13.6px;font-weight:400;color:#3a3e44;font-family:'Liberation Sans', sans-serif;letter-spacing:0.15px;">&quot;coco&quot;: 4,</div>
<div class="t r" style="left:465.00px;top:1012px;font-size:13.6px;line-height:13.6px;font-weight:400;color:#3a3e44;font-family:'Liberation Sans', sans-serif;letter-spacing:0.1px;">&quot;country&quot;: &quot;US&quot;,</div>
<div class="t r" style="left:572.60px;top:1012px;font-size:13.6px;line-height:13.6px;font-weight:400;color:#3a3e44;font-family:'Liberation Sans', sans-serif;letter-spacing:0.35px;">&quot;dwpt&quot;: 11.7,</div>
<div class="t r" style="left:665.20px;top:1012px;font-size:13.6px;line-height:13.6px;font-weight:400;color:#3a3e44;font-family:'Liberation Sans', sans-serif;letter-spacing:0.07px;">&quot;elevation&quot;: 4,</div>
<div class="t r" style="left:761.80px;top:1012px;font-size:13.6px;line-height:13.6px;font-weight:400;color:#3a3e44;font-family:'Liberation Sans', sans-serif;letter-spacing:-0.05px;">&quot;icao&quot;: &quot;KJFK&quot;,</div>
<div class="t r" style="left:861.50px;top:1012px;font-size:13.6px;line-height:13.6px;font-weight:400;color:#3a3e44;font-family:'Liberation Sans', sans-serif;letter-spacing:0.3px;">&quot;latitude&quot;: 40.6333,</div>
<div class="t r" style="left:994.30px;top:1012px;font-size:13.6px;line-height:13.6px;font-weight:400;color:#3a3e44;font-family:'Liberation Sans', sans-serif;letter-spacing:0.33px;">&quot;longitude&quot;: -73.7667,</div>
<div class="t r" style="left:1143.40px;top:1012px;font-size:13.6px;line-height:13.6px;font-weight:400;color:#3a3e44;font-family:'Liberation Sans', sans-serif;letter-spacing:0.06px;">&quot;name&quot;: &quot;John F. Kennedy Airport&quot;,</div>
<div class="t r" style="left:1366.80px;top:1012px;font-size:13.6px;line-height:13.6px;font-weight:400;color:#3a3e44;font-family:'Liberation Sans', sans-serif;letter-spacing:0.1px;">&quot;obsTime&quot;</div>
<div class="a" style="left:330px;top:1032px;width:1100px;height:1px;background:#e1e2e4"></div>
<div class="t r" style="left:328.80px;top:1041px;font-size:13px;line-height:13px;font-weight:400;color:#9da1a6;font-family:'Liberation Sans', sans-serif;letter-spacing:0px;width:35px;text-align:center">10</div>
<div class="t r" style="left:378.40px;top:1041px;font-size:13.6px;line-height:13.6px;font-weight:400;color:#3a3e44;font-family:'Liberation Sans', sans-serif;letter-spacing:0px;">{</div>
<div class="t r" style="left:393.60px;top:1041px;font-size:13.6px;line-height:13.6px;font-weight:400;color:#3a3e44;font-family:'Liberation Sans', sans-serif;letter-spacing:0.15px;">&quot;coco&quot;: 4,</div>
<div class="t r" style="left:465.00px;top:1041px;font-size:13.6px;line-height:13.6px;font-weight:400;color:#3a3e44;font-family:'Liberation Sans', sans-serif;letter-spacing:0.1px;">&quot;country&quot;: &quot;US&quot;,</div>
<div class="t r" style="left:572.60px;top:1041px;font-size:13.6px;line-height:13.6px;font-weight:400;color:#3a3e44;font-family:'Liberation Sans', sans-serif;letter-spacing:0.35px;">&quot;dwpt&quot;: 11.7,</div>
<div class="t r" style="left:665.20px;top:1041px;font-size:13.6px;line-height:13.6px;font-weight:400;color:#3a3e44;font-family:'Liberation Sans', sans-serif;letter-spacing:0.07px;">&quot;elevation&quot;: 4,</div>
<div class="t r" style="left:761.80px;top:1041px;font-size:13.6px;line-height:13.6px;font-weight:400;color:#3a3e44;font-family:'Liberation Sans', sans-serif;letter-spacing:-0.05px;">&quot;icao&quot;: &quot;KJFK&quot;,</div>
<div class="t r" style="left:861.50px;top:1041px;font-size:13.6px;line-height:13.6px;font-weight:400;color:#3a3e44;font-family:'Liberation Sans', sans-serif;letter-spacing:0.3px;">&quot;latitude&quot;: 40.6333,</div>
<div class="t r" style="left:994.30px;top:1041px;font-size:13.6px;line-height:13.6px;font-weight:400;color:#3a3e44;font-family:'Liberation Sans', sans-serif;letter-spacing:0.33px;">&quot;longitude&quot;: -73.7667,</div>
<div class="t r" style="left:1143.40px;top:1041px;font-size:13.6px;line-height:13.6px;font-weight:400;color:#3a3e44;font-family:'Liberation Sans', sans-serif;letter-spacing:0.06px;">&quot;name&quot;: &quot;John F. Kennedy Airport&quot;,</div>
<div class="t r" style="left:1366.80px;top:1041px;font-size:13.6px;line-height:13.6px;font-weight:400;color:#3a3e44;font-family:'Liberation Sans', sans-serif;letter-spacing:0.1px;">&quot;obsTime&quot;</div>
<div class="a" style="left:1431px;top:736px;width:8px;height:326px;background:#f8f8f8"></div>
<div class="a" style="left:1430px;top:736px;width:1px;height:326px;background:#e1e2e4"></div>
<div class="a" style="left:365px;top:736px;width:1px;height:326px;background:#e1e2e4"></div>
<div class="a" style="left:329px;top:772px;width:1101px;height:30px;border:2px solid #1a5ddf"></div>
<div class="t" style="left:1460.20px;top:750px;font-size:12.5px;line-height:12.5px;font-weight:700;color:#464a50;font-family:'Liberation Sans', sans-serif;letter-spacing:0px;">Row 1 / 10</div>
<div class="t r" style="left:1460.20px;top:780px;font-size:13px;line-height:13px;font-weight:400;color:#6b6f75;font-family:'Liberation Sans', sans-serif;letter-spacing:0px;">V</div>
<div class="a" style="left:1440px;top:800px;width:261px;height:504px;overflow:hidden">
<div class="t" style="left:34px;top:4px;font:13.5px/13.5px 'Liberation Mono', monospace;letter-spacing:0.33px"><span style="color:#3d4147">{</span></div>
<div class="t" style="left:34px;top:22px;font:13.5px/13.5px 'Liberation Mono', monospace;letter-spacing:0.33px"><span style="color:#3d4147">  </span><span style="color:#c41d2f">&quot;coco&quot;</span><span style="color:#3d4147">: </span><span style="color:#0b6e4f">3</span><span style="color:#3d4147">,</span></div>
<div class="t" style="left:34px;top:40px;font:13.5px/13.5px 'Liberation Mono', monospace;letter-spacing:0.33px"><span style="color:#3d4147">  </span><span style="color:#c41d2f">&quot;country&quot;</span><span style="color:#3d4147">: </span><span style="color:#c41d2f">&quot;US&quot;</span><span style="color:#3d4147">,</span></div>
<div class="t" style="left:34px;top:58px;font:13.5px/13.5px 'Liberation Mono', monospace;letter-spacing:0.33px"><span style="color:#3d4147">  </span><span style="color:#c41d2f">&quot;dwpt&quot;</span><span style="color:#3d4147">: </span><span style="color:#0b6e4f">12.8</span><span style="color:#3d4147">,</span></div>
<div class="t" style="left:34px;top:76px;font:13.5px/13.5px 'Liberation Mono', monospace;letter-spacing:0.33px"><span style="color:#3d4147">  </span><span style="color:#c41d2f">&quot;elevation&quot;</span><span style="color:#3d4147">: </span><span style="color:#0b6e4f">4</span><span style="color:#3d4147">,</span></div>
<div class="t" style="left:34px;top:94px;font:13.5px/13.5px 'Liberation Mono', monospace;letter-spacing:0.33px"><span style="color:#3d4147">  </span><span style="color:#c41d2f">&quot;icao&quot;</span><span style="color:#3d4147">: </span><span style="color:#c41d2f">&quot;KJFK&quot;</span><span style="color:#3d4147">,</span></div>
<div class="t" style="left:34px;top:112px;font:13.5px/13.5px 'Liberation Mono', monospace;letter-spacing:0.33px"><span style="color:#3d4147">  </span><span style="color:#c41d2f">&quot;latitude&quot;</span><span style="color:#3d4147">: </span><span style="color:#0b6e4f">40.6333</span><span style="color:#3d4147">,</span></div>
<div class="t" style="left:34px;top:130px;font:13.5px/13.5px 'Liberation Mono', monospace;letter-spacing:0.33px"><span style="color:#3d4147">  </span><span style="color:#c41d2f">&quot;longitude&quot;</span><span style="color:#3d4147">:</span></div>
<div class="t" style="left:34px;top:148px;font:13.5px/13.5px 'Liberation Mono', monospace;letter-spacing:0.33px"><span style="color:#0b6e4f">-73.7667</span><span style="color:#3d4147">,</span></div>
<div class="t" style="left:34px;top:166px;font:13.5px/13.5px 'Liberation Mono', monospace;letter-spacing:0.33px"><span style="color:#3d4147">  </span><span style="color:#c41d2f">&quot;name&quot;</span><span style="color:#3d4147">: </span><span style="color:#c41d2f">&quot;John F.</span></div>
<div class="t" style="left:34px;top:184px;font:13.5px/13.5px 'Liberation Mono', monospace;letter-spacing:0.33px"><span style="color:#c41d2f">Kennedy Airport&quot;</span><span style="color:#3d4147">,</span></div>
<div class="t" style="left:34px;top:202px;font:13.5px/13.5px 'Liberation Mono', monospace;letter-spacing:0.33px"><span style="color:#3d4147">  </span><span style="color:#c41d2f">&quot;obsTime&quot;</span><span style="color:#3d4147">: </span><span style="color:#c41d2f">&quot;2018-11-</span></div>
<div class="t" style="left:34px;top:220px;font:13.5px/13.5px 'Liberation Mono', monospace;letter-spacing:0.33px"><span style="color:#c41d2f">01T00:00:00.000Z&quot;</span><span style="color:#3d4147">,</span></div>
<div class="t" style="left:34px;top:238px;font:13.5px/13.5px 'Liberation Mono', monospace;letter-spacing:0.33px"><span style="color:#3d4147">  </span><span style="color:#c41d2f">&quot;prcp&quot;</span><span style="color:#3d4147">: </span><span style="color:#0b6e4f">0</span><span style="color:#3d4147">,</span></div>
<div class="t" style="left:34px;top:256px;font:13.5px/13.5px 'Liberation Mono', monospace;letter-spacing:0.33px"><span style="color:#3d4147">  </span><span style="color:#c41d2f">&quot;pres&quot;</span><span style="color:#3d4147">: </span><span style="color:#0b6e4f">1014.1</span><span style="color:#3d4147">,</span></div>
<div class="t" style="left:34px;top:274px;font:13.5px/13.5px 'Liberation Mono', monospace;letter-spacing:0.33px"><span style="color:#3d4147">  </span><span style="color:#c41d2f">&quot;region&quot;</span><span style="color:#3d4147">: </span><span style="color:#c41d2f">&quot;NY&quot;</span><span style="color:#3d4147">,</span></div>
<div class="t" style="left:34px;top:292px;font:13.5px/13.5px 'Liberation Mono', monospace;letter-spacing:0.33px"><span style="color:#3d4147">  </span><span style="color:#c41d2f">&quot;rhum&quot;</span><span style="color:#3d4147">: </span><span style="color:#0b6e4f">90</span><span style="color:#3d4147">,</span></div>
<div class="t" style="left:34px;top:310px;font:13.5px/13.5px 'Liberation Mono', monospace;letter-spacing:0.33px"><span style="color:#3d4147">  </span><span style="color:#c41d2f">&quot;snow&quot;</span><span style="color:#3d4147">: </span><span style="color:#0b6e4f">null</span><span style="color:#3d4147">,</span></div>
<div class="t" style="left:34px;top:328px;font:13.5px/13.5px 'Liberation Mono', monospace;letter-spacing:0.33px"><span style="color:#3d4147">  </span><span style="color:#c41d2f">&quot;station&quot;</span><span style="color:#3d4147">: </span><span style="color:#c41d2f">&quot;74486&quot;</span><span style="color:#3d4147">,</span></div>
<div class="t" style="left:34px;top:346px;font:13.5px/13.5px 'Liberation Mono', monospace;letter-spacing:0.33px"><span style="color:#3d4147">  </span><span style="color:#c41d2f">&quot;temp&quot;</span><span style="color:#3d4147">: </span><span style="color:#0b6e4f">14.4</span><span style="color:#3d4147">,</span></div>
<div class="t" style="left:34px;top:364px;font:13.5px/13.5px 'Liberation Mono', monospace;letter-spacing:0.33px"><span style="color:#3d4147">  </span><span style="color:#c41d2f">&quot;timezone&quot;</span><span style="color:#3d4147">:</span></div>
<div class="t" style="left:34px;top:382px;font:13.5px/13.5px 'Liberation Mono', monospace;letter-spacing:0.33px"><span style="color:#c41d2f">&quot;America/New_York&quot;</span><span style="color:#3d4147">,</span></div>
<div class="t" style="left:34px;top:400px;font:13.5px/13.5px 'Liberation Mono', monospace;letter-spacing:0.33px"><span style="color:#3d4147">  </span><span style="color:#c41d2f">&quot;tsun&quot;</span><span style="color:#3d4147">: </span><span style="color:#0b6e4f">null</span><span style="color:#3d4147">,</span></div>
<div class="t" style="left:34px;top:418px;font:13.5px/13.5px 'Liberation Mono', monospace;letter-spacing:0.33px"><span style="color:#3d4147">  </span><span style="color:#c41d2f">&quot;wdir&quot;</span><span style="color:#3d4147">: </span><span style="color:#0b6e4f">180</span><span style="color:#3d4147">,</span></div>
<div class="t" style="left:34px;top:436px;font:13.5px/13.5px 'Liberation Mono', monospace;letter-spacing:0.33px"><span style="color:#3d4147">  </span><span style="color:#c41d2f">&quot;weatherCondition&quot;</span><span style="color:#3d4147">:</span></div>
<div class="t" style="left:34px;top:454px;font:13.5px/13.5px 'Liberation Mono', monospace;letter-spacing:0.33px"><span style="color:#c41d2f">&quot;Cloudy&quot;</span><span style="color:#3d4147">,</span></div>
<div class="t" style="left:34px;top:472px;font:13.5px/13.5px 'Liberation Mono', monospace;letter-spacing:0.33px"><span style="color:#3d4147">  </span><span style="color:#c41d2f">&quot;wmo&quot;</span><span style="color:#3d4147">: </span><span style="color:#c41d2f">&quot;74486&quot;</span><span style="color:#3d4147">,</span></div>
<div class="t" style="left:34px;top:490px;font:13.5px/13.5px 'Liberation Mono', monospace;letter-spacing:0.33px"><span style="color:#3d4147">  </span><span style="color:#c41d2f">&quot;wpgt&quot;</span><span style="color:#3d4147">: </span><span style="color:#0b6e4f">null</span><span style="color:#3d4147">,</span></div>
<div class="t" style="left:34px;top:508px;font:13.5px/13.5px 'Liberation Mono', monospace;letter-spacing:0.33px"><span style="color:#3d4147">  </span><span style="color:#c41d2f">&quot;wspd&quot;</span><span style="color:#3d4147">: </span><span style="color:#0b6e4f">7.6</span><span style="color:#3d4147">,</span></div>
</div>
<div class="a" style="left:1701px;top:775px;width:1px;height:529px;background:#e6e7e8"></div>
<div class="a" style="left:1715px;top:775px;width:1px;height:529px;background:#eeeeef"></div>
<div class="a" style="left:1705px;top:778px;width:8px;height:465px;border-radius:4px;background:#c2c2c2"></div>
<div class="a" style="left:321px;top:1296px;width:1118px;height:8px;background:#fff"></div>
<div class="a" style="left:321px;top:102px;width:5px;height:1202px;background:rgba(0,0,0,0.028)"></div>
<svg style="left:1700px;top:1284px" width="20" height="20"><path d="M20 8 A12 12 0 0 1 8 20 L20 20 Z" fill="#1f2b4d"/></svg>
<svg style="left:0px;top:1284px" width="20" height="20"><path d="M0 7 A12 12 0 0 0 12 19.5 L12 20 L0 20 Z" fill="#1f2b4d"/></svg>
</div></body></html>
